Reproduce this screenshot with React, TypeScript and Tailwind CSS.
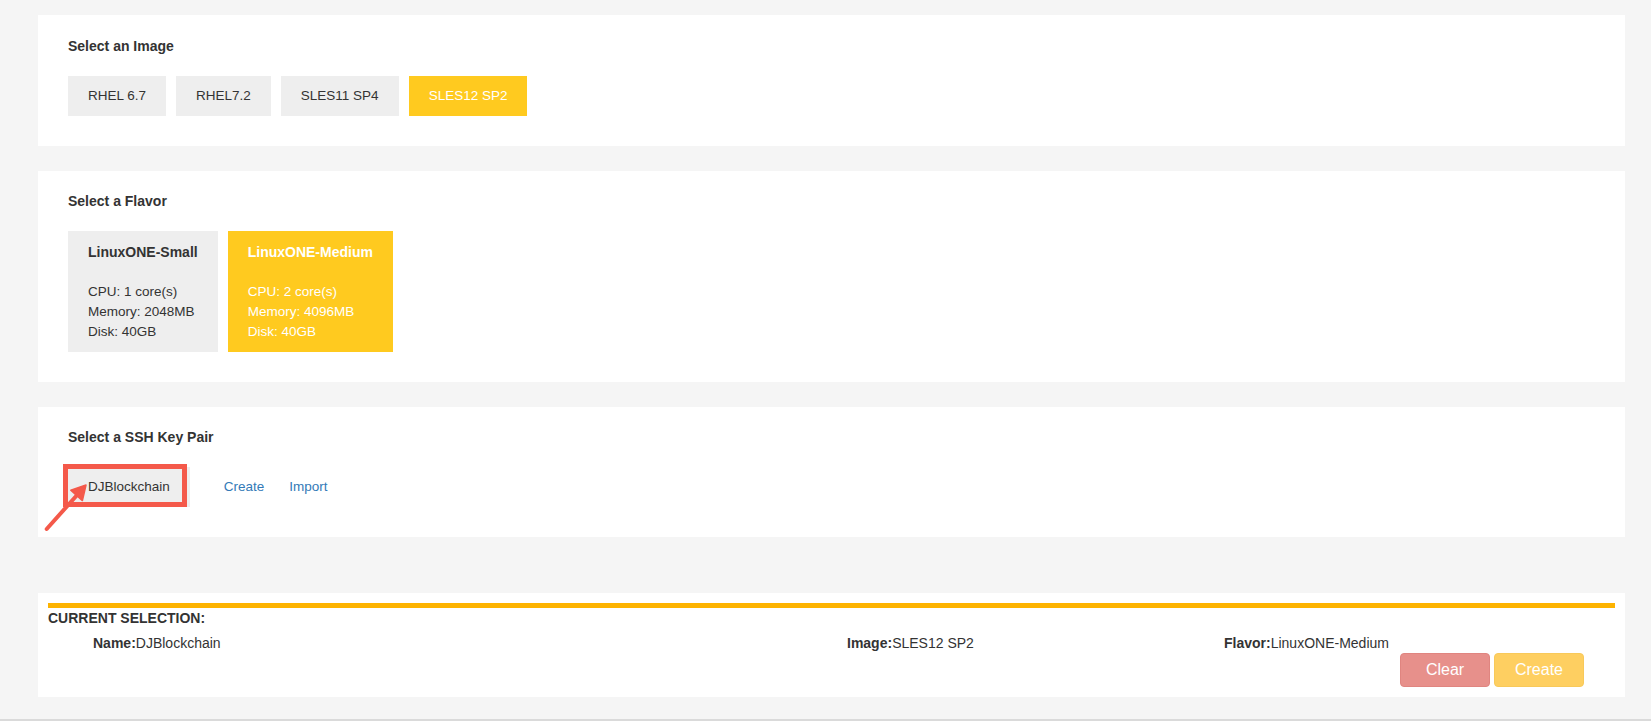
import React from "react";

const images = ["RHEL 6.7", "RHEL7.2", "SLES11 SP4", "SLES12 SP2"];
const flavors = [
  { name: "LinuxONE-Small", cpu: 1, mem: 2048, disk: 40 },
  { name: "LinuxONE-Medium", cpu: 2, mem: 4096, disk: 40 },
];

export default function App() {
  const selectedImage = "SLES12 SP2";
  const selectedFlavor = "LinuxONE-Medium";
  return (
    <div className="min-h-[721px] bg-[#f5f5f5] border-b-2 border-[#dadada] pl-[38px] pr-[26px] pt-[15px] font-['Liberation_Sans',Arial,sans-serif] text-[#333]">
      {/* Image card */}
      <section className="bg-white pt-[21px] pb-[30px] px-[30px]">
        <h2 className="text-[14px] font-bold leading-5">Select an Image</h2>
        <div className="mt-5 flex gap-[10px]">
          {images.map((img) => (
            <button
              key={img}
              className={
                img === selectedImage
                  ? "h-10 px-5 bg-[#ffca1f] text-white text-[13.5px] leading-10"
                  : "h-10 px-5 bg-[#eeeeee] text-[#333] text-[13.5px] leading-10"
              }
            >
              {img}
            </button>
          ))}
        </div>
      </section>

      {/* Flavor card */}
      <section className="mt-[25px] bg-white pt-5 pb-[30px] px-[30px]">
        <h2 className="text-[14px] font-bold leading-5">Select a Flavor</h2>
        <div className="mt-5 flex gap-[10px]">
          {flavors.map((f) => (
            <div
              key={f.name}
              className={
                f.name === selectedFlavor
                  ? "pt-[11px] pb-[10px] px-5 bg-[#ffca1f] text-white"
                  : "pt-[11px] pb-[10px] px-5 bg-[#eeeeee] text-[#333]"
              }
            >
              <div className="text-[14px] font-bold leading-5">{f.name}</div>
              <div className="mt-5 text-[13.5px] leading-5">
                <div>CPU: {f.cpu} core(s)</div>
                <div>Memory: {f.mem}MB</div>
                <div>Disk: {f.disk}GB</div>
              </div>
            </div>
          ))}
        </div>
      </section>

      {/* SSH key card */}
      <section className="mt-[25px] bg-white pt-5 pb-[30px] px-[30px]">
        <h2 className="text-[14px] font-bold leading-5">Select a SSH Key Pair</h2>
        <div className="mt-5 flex items-center h-10">
          <div className="relative">
            <button className="h-10 px-5 bg-[#eeeeee] text-[#333] text-[13.5px] leading-10">
              DJBlockchain
            </button>
            <div className="absolute left-[-5px] top-[-3px] w-[124px] h-[43px] border-[5px] border-[#f4594a] pointer-events-none" />
            <svg
              className="absolute left-[-28px] top-[12px] pointer-events-none"
              width="52"
              height="60"
              viewBox="0 0 52 60"
            >
              <line x1="6.7" y1="50" x2="38" y2="15" stroke="#f4594a" strokeWidth="4" strokeLinecap="round" />
              <polygon points="46,6 42.4,21.6 30.8,11.2" fill="#f4594a" stroke="#f4594a" strokeWidth="1.5" strokeLinejoin="round" />
            </svg>
          </div>
          <a className="ml-[34px] text-[13.5px] text-[#337ab7] cursor-pointer">Create</a>
          <a className="ml-[25px] text-[13.5px] text-[#337ab7] cursor-pointer">Import</a>
        </div>
      </section>

      {/* Current selection */}
      <section className="mt-[56px] bg-white pt-[10px] pb-[10px] px-[10px]">
        <div className="h-[5px] bg-[#fdb300]" />
        <div className="text-[14px] font-bold leading-5">CURRENT SELECTION:</div>
        <div className="mt-[5px] flex text-[14px] leading-5 pl-[45px]">
          <div className="w-[754px]">
            <span className="font-bold">Name:</span>DJBlockchain
          </div>
          <div className="w-[377px]">
            <span className="font-bold">Image:</span>
            {selectedImage}
          </div>
          <div>
            <span className="font-bold">Flavor:</span>
            {selectedFlavor}
          </div>
        </div>
        <div className="flex justify-end gap-1 pr-[31px]">
          <button className="h-[34px] w-[90px] rounded bg-[#e7908b] border border-[#e08580] text-white text-[16px]">
            Clear
          </button>
          <button className="h-[34px] w-[90px] rounded bg-[#fecf61] border border-[#f8c95a] text-white text-[16px]">
            Create
          </button>
        </div>
      </section>
    </div>
  );
}
